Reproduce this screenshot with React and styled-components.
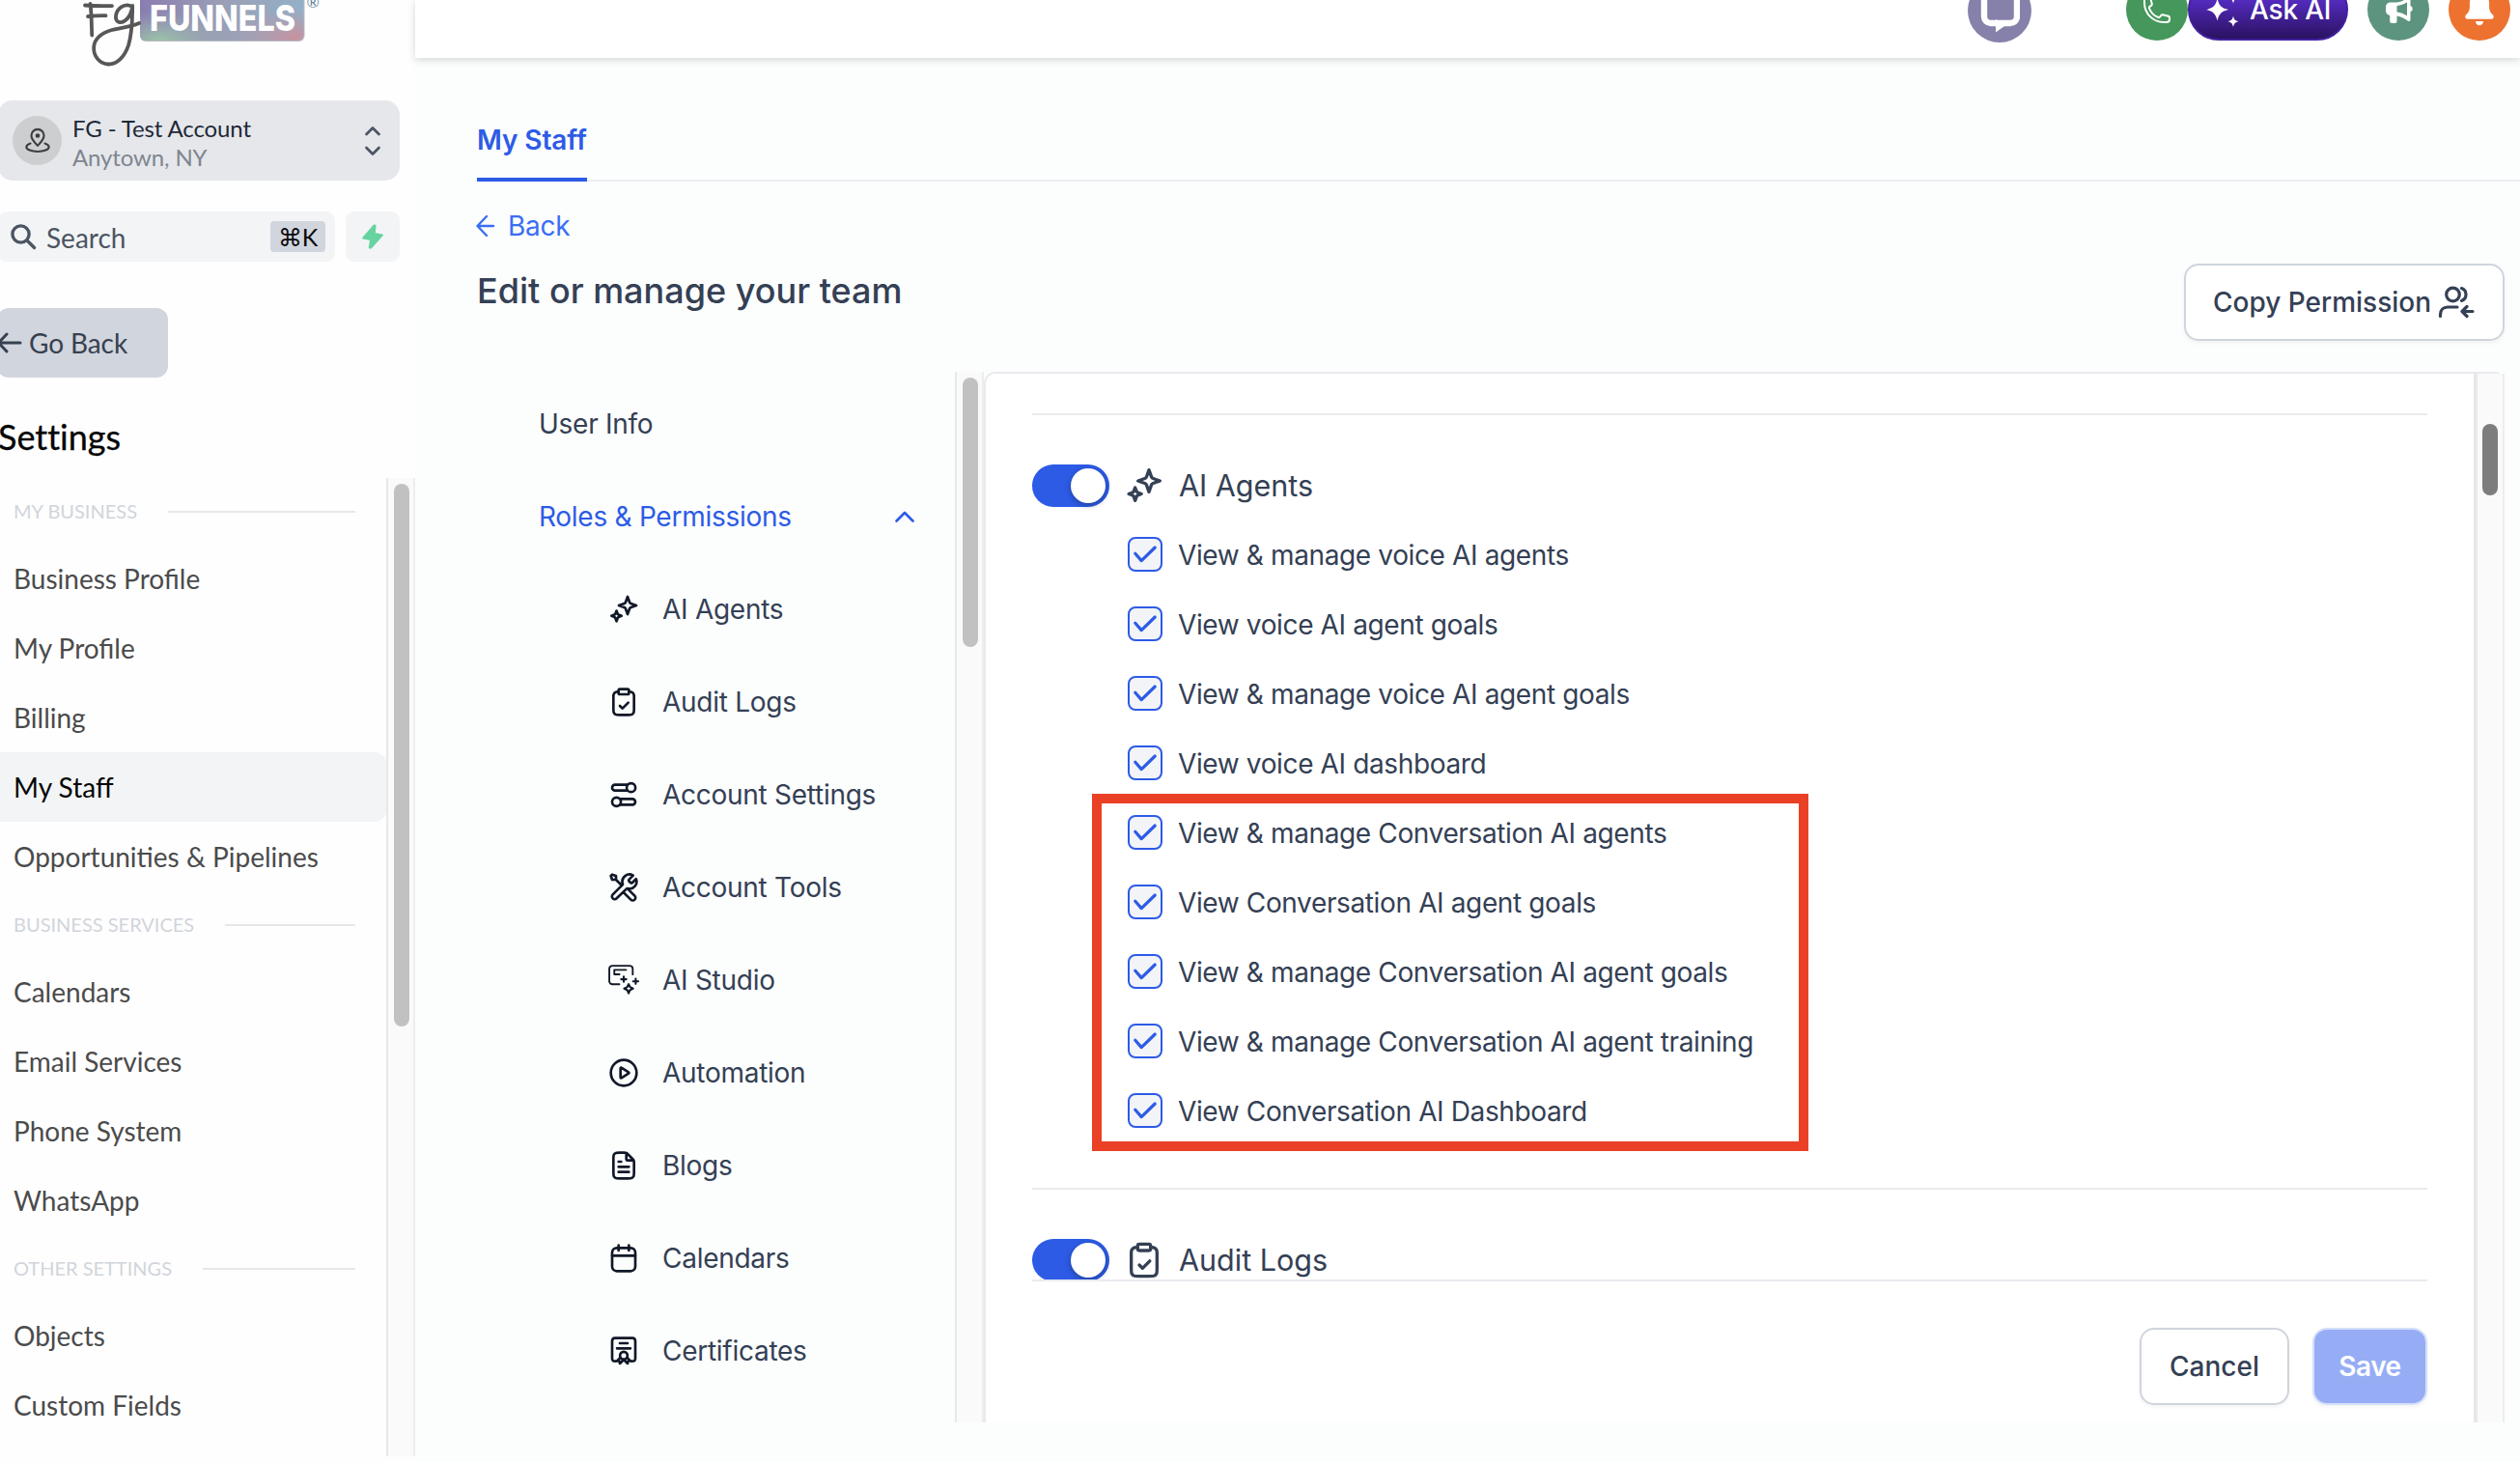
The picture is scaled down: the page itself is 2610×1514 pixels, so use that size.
import React from "react";
import styled, { createGlobalStyle, css } from "styled-components";

const GlobalStyle = createGlobalStyle`
  * { box-sizing: border-box; }
  html, body { margin: 0; padding: 0; background: #fcfdfd; overflow: hidden; }
  button { font: inherit; color: inherit; border: 0; margin: 0; padding: 0; cursor: pointer; }
  svg { display: block; flex: none; }
`;

const lato = `Lato, "Open Sans", sans-serif`;
const inter = `Inter, Roboto, sans-serif`;

/* ---------- shell ---------- */

const Page = styled.div`
  display: flex;
  width: 2610px;
  height: 1514px;
  overflow: hidden;
  background: #fcfdfd;
  font-family: ${inter};
  font-size: 28px;
  letter-spacing: -0.27px;
  color: #344054;
`;

const Sidebar = styled.aside`
  flex: none;
  width: 430px;
  height: 1514px;
  display: flex;
  flex-direction: column;
  background: #fefefe;
  font-family: ${lato};
  letter-spacing: 0;
  overflow: hidden;
`;

const Main = styled.main`
  flex: 1;
  min-width: 0;
  display: flex;
  flex-direction: column;
`;

/* ---------- sidebar ---------- */

const LogoBox = styled.div`
  height: 104px;
  padding-left: 80px;
`;

const AccountSwitcher = styled.button`
  display: flex;
  align-items: center;
  width: 416px;
  height: 83px;
  margin-left: -2px;
  padding: 0 19px 0 15px;
  border-radius: 15px;
  background: #e5e7eb;
  text-align: left;
`;

const Avatar = styled.span`
  display: grid;
  place-items: center;
  width: 51px;
  height: 51px;
  border-radius: 50%;
  background: #cdced0;
  color: #3d3d3f;
`;

const AccountText = styled.span`
  flex: 1;
  display: flex;
  flex-direction: column;
  padding: 5px 0 0 11px;
  font-size: 24px;
  line-height: 30px;
  letter-spacing: -0.12px;
  color: #1f2937;
  white-space: nowrap;
`;

const Muted = styled.span`
  color: #80858f;
`;

const SearchRow = styled.div`
  display: flex;
  gap: 11px;
  margin: 32px 0 0 -2px;
`;

const SearchBox = styled.div`
  display: flex;
  align-items: center;
  width: 349px;
  height: 52px;
  padding: 0 10px 0 12px;
  border-radius: 9px;
  background: #f3f4f6;
  color: #4b5563;
`;

const SearchLabel = styled.span`
  flex: 1;
  padding: 1px 0 0 10px;
  font-size: 28px;
  line-height: 34px;
`;

const Shortcut = styled.kbd`
  display: flex;
  align-items: center;
  justify-content: center;
  gap: 2px;
  width: 57px;
  height: 32px;
  border-radius: 4px;
  background: #d1d5de;
  color: #0b0b0c;
  font-family: ${lato};
  font-size: 25px;
`;

const QuickButton = styled.button`
  display: grid;
  place-items: center;
  width: 56px;
  height: 52px;
  border-radius: 9px;
  background: #f3f4f6;
`;

const GoBack = styled.button`
  display: flex;
  align-items: center;
  gap: 7px;
  width: 177px;
  height: 72px;
  margin: 48px 0 0 -3px;
  border-radius: 12px;
  background: #d1d5dd;
  color: #374151;
  font-size: 28px;
  letter-spacing: -0.1px;
  white-space: nowrap;
`;

const SettingsTitle = styled.h1`
  margin: 39px 0 21px -2px;
  height: 44px;
  font-size: 36px;
  line-height: 44px;
  font-weight: 400;
  font-variant-ligatures: none;
  color: #060606;
  -webkit-text-stroke: 0.3px #060606;
`;

const SettingsScroll = styled.div`
  display: flex;
  height: 1013px;
`;

const SettingsNav = styled.nav`
  width: 400px;
`;

const GroupTitle = styled.div`
  display: flex;
  align-items: center;
  gap: 32px;
  height: 68px;
  padding: 0 32px 0 14px;
  font-size: 20px;
  color: #d1d5db;
  white-space: nowrap;

  &::after {
    content: "";
    flex: 1;
    height: 2px;
    margin-top: 2px;
    background: #e5e7eb;
  }
`;

const SettingsItem = styled.a`
  display: flex;
  align-items: center;
  height: 72px;
  padding-left: 14px;
  border-radius: 0 12px 12px 0;
  font-size: 28px;
  white-space: nowrap;
  color: ${(p) => (p.$active ? "#050505" : "#4b4b4c")};
  background: ${(p) => (p.$active ? "#f3f4f6" : "transparent")};
`;

/* ---------- scroll tracks ---------- */

const Track = styled.div`
  flex: none;
  width: ${(p) => p.$width || 30}px;
  padding: ${(p) => p.$offset}px 0 0 ${(p) => p.$inset || 6}px;
  background: #fafafa;
  border-left: ${(p) => p.$edge || 2}px solid #e8e8e8;
  border-right: 2px solid #ededed;
`;

const Thumb = styled.div`
  width: 16px;
  height: ${(p) => p.$length}px;
  border-radius: 8px;
  background: ${(p) => p.$color || "#c1c1c1"};
`;

/* ---------- top bar ---------- */

const TopBar = styled.header`
  position: relative;
  flex: none;
  display: flex;
  align-items: flex-start;
  justify-content: flex-end;
  height: 60px;
  padding-right: 10px;
  background: #fff;
  box-shadow: 0 2px 8px rgba(0, 0, 0, 0.16);
`;

const RoundButton = styled.button`
  display: grid;
  place-items: center;
  flex: none;
  width: ${(p) => p.$size || 64}px;
  height: ${(p) => p.$size || 64}px;
  margin: -22px ${(p) => p.$after || 0}px 0 0;
  border-radius: 50%;
  background: ${(p) => p.$color};
  color: #fff;
`;

const AskButton = styled.button`
  display: flex;
  align-items: center;
  flex: none;
  gap: 10px;
  width: 166px;
  height: 64px;
  margin: -22px 20px 0 0;
  padding-left: 16px;
  border-radius: 32px;
  border: 2px solid #43209f;
  background: linear-gradient(#6a3be0 0%, #5129b8 38%, #2a1260 100%);
  color: #fff;
  font-size: 28px;
  font-weight: 500;
  letter-spacing: -0.2px;
  white-space: nowrap;
`;

/* ---------- page head ---------- */

const Tabs = styled.div`
  flex: none;
  display: flex;
  height: 128px;
  margin-left: 64px;
  border-bottom: 2px solid #eceef3;
`;

const Tab = styled.a`
  height: 128px;
  padding-top: 68px;
  border-bottom: 4px solid #2d5be6;
  color: #2d5be6;
  font-weight: 600;
  font-size: 28px;
  line-height: 34px;
  letter-spacing: -0.1px;
  white-space: nowrap;
`;

const PageHead = styled.div`
  flex: none;
  display: flex;
  justify-content: space-between;
  height: 197px;
  padding: 0 16px 0 64px;
`;

const HeadText = styled.div`
  padding-top: 28px;
`;

const BackLink = styled.a`
  display: flex;
  align-items: center;
  gap: 13px;
  height: 36px;
  margin-left: -1px;
  color: #3a6ef4;
  font-size: 28px;
`;

const Title = styled.h2`
  margin: 27px 0 0;
  height: 44px;
  font-size: 36px;
  line-height: 44px;
  font-weight: 500;
  letter-spacing: 0;
  color: #344054;
  white-space: nowrap;
`;

const Button = styled.button`
  display: flex;
  align-items: center;
  justify-content: center;
  gap: 6px;
  width: ${(p) => p.$width}px;
  height: 80px;
  border-radius: 15px;
  border: 2px solid #d0d5dd;
  background: #fff;
  box-shadow: 0 2px 4px rgba(16, 24, 40, 0.05);
  color: #344054;
  font-size: 28px;
  font-weight: 500;
  white-space: nowrap;

  ${(p) =>
    p.$primary &&
    css`
      border-color: #d5dffb;
      background: #96adf5;
      color: #fff;
      font-weight: 600;
      letter-spacing: -0.5px;
    `}
`;

const HeadButton = styled(Button)`
  margin-top: 85px;
`;

/* ---------- permission area ---------- */

const Body = styled.div`
  display: flex;
  height: 1088px;
  padding-right: 16px;
`;

const RoleNav = styled.nav`
  flex: none;
  width: 559px;
  padding-top: 6px;
`;

const RoleItem = styled.a`
  display: flex;
  align-items: center;
  justify-content: space-between;
  height: 96px;
  padding: 0 41px 0 128px;
  color: ${(p) => (p.$active ? "#2d5be6" : "#344054")};
  white-space: nowrap;
`;

const RoleChild = styled.a`
  display: flex;
  align-items: center;
  gap: 24px;
  height: 96px;
  padding-left: 200px;
  white-space: nowrap;

  svg { color: #101828; }
`;

const Panel = styled.section`
  flex: 1;
  display: flex;
  border-top: 2px solid #eaeaef;
  border-left: 2px solid #eaeaef;
  border-radius: 12px 10px 0 0;
  background: #fff;
`;

const PanelInner = styled.div`
  flex: 1;
  display: flex;
  flex-direction: column;
  padding: 0 48px;
`;

const PermissionList = styled.div`
  position: relative;
  height: 938px;
  padding-top: 41px;
  overflow: hidden;
`;

const PermissionGroup = styled.div`
  border-top: 2px solid #eaeaef;
  padding-top: 51px;
  height: 802px;
`;

const GroupHead = styled.div`
  display: flex;
  align-items: center;
  gap: 16px;
  height: 44px;
  font-size: 30.5px;
  line-height: 36px;
  letter-spacing: 0;
  white-space: nowrap;
`;

const Toggle = styled.span`
  display: flex;
  justify-content: flex-end;
  width: 80px;
  height: 44px;
  padding: 4px;
  border-radius: 22px;
  background: #2d5be6;

  &::after {
    content: "";
    width: 36px;
    height: 36px;
    border-radius: 50%;
    background: #fff;
    box-shadow: 0 2px 6px rgba(16, 24, 40, 0.4);
  }
`;

const Options = styled.div`
  padding: 13px 0 0 99px;
`;

const Option = styled.label`
  display: flex;
  align-items: center;
  gap: 16px;
  height: 72px;
  letter-spacing: -0.37px;
  white-space: nowrap;
`;

const OptionText = styled.span`
  padding-top: 2px;
`;

const Box = styled.span`
  display: grid;
  place-items: center;
  width: 36px;
  height: 36px;
  border: 2px solid #2d5be6;
  border-radius: 8px;
  background: #f2f4f7;
  color: #2d5be6;
`;

const Highlight = styled.div`
  position: absolute;
  left: 62px;
  top: 435px;
  width: 742px;
  height: 370px;
  border: 10px solid #ea4026;
  pointer-events: none;
`;

const PanelFooter = styled.footer`
  display: flex;
  justify-content: flex-end;
  gap: 24px;
  padding-top: 48px;
  border-top: 2px solid #eaeaef;
`;

/* ---------- icons ---------- */

const Icon = ({ size = 32, width = 2, children }) => (
  <svg
    width={size}
    height={size}
    viewBox="0 0 24 24"
    fill="none"
    stroke="currentColor"
    strokeWidth={width}
    strokeLinecap="round"
    strokeLinejoin="round"
  >
    {children}
  </svg>
);

const StarsIcon = (p) => (
  <Icon {...p}>
    <path d="M15 2.2l1.5 4.2c.2.6.5.9 1.1 1.1L21.8 9l-4.2 1.5c-.6.2-.9.5-1.1 1.1L15 15.8l-1.5-4.2c-.2-.6-.5-.9-1.1-1.1L8.2 9l4.2-1.5c.6-.2.9-.5 1.1-1.1z" />
    <path d="M6.4 13.2l.9 2.3c.15.4.3.55.7.7l2.3.9-2.3.9c-.4.15-.55.3-.7.7l-.9 2.5-.9-2.5c-.15-.4-.3-.55-.7-.7l-2.3-.9 2.3-.9c.4-.15.55-.3.7-.7z" />
  </Icon>
);

const ClipboardIcon = (p) => (
  <Icon {...p}>
    <path d="M16 4c.93 0 1.4 0 1.78.1a3 3 0 0 1 2.12 2.12C20 6.6 20 7.07 20 8v9.2c0 1.68 0 2.52-.33 3.16a3 3 0 0 1-1.31 1.31C17.72 22 16.88 22 15.2 22H8.8c-1.68 0-2.52 0-3.16-.33a3 3 0 0 1-1.31-1.31C4 19.72 4 18.88 4 17.2V8c0-.93 0-1.4.1-1.78A3 3 0 0 1 6.22 4.1C6.6 4 7.07 4 8 4" />
    <rect x="8" y="2" width="8" height="4" rx="1" />
    <path d="M9 15l2 2 4.5-4.5" />
  </Icon>
);

const TogglesIcon = (p) => (
  <Icon {...p}>
    <path d="M14.6 4.25H5.25a2.25 2.25 0 0 0 0 4.5h9.35M9.4 15.25h9.35a2.25 2.25 0 0 1 0 4.5H9.4" />
    <circle cx="17.7" cy="6.5" r="3.4" />
    <circle cx="6.4" cy="17.5" r="3.4" />
  </Icon>
);

const ToolsIcon = (p) => (
  <Icon {...p}>
    <path d="M6 6l4.5 4.5M6 6H3L2 3l1-1 3 1v3zm13.26-3.26l-2.63 2.63c-.4.4-.6.6-.67.82a1 1 0 0 0 0 .62c.07.23.27.43.67.82l.24.24c.4.4.6.6.82.67a1 1 0 0 0 .62 0c.23-.07.43-.27.82-.67l2.46-2.46a5.5 5.5 0 0 1-6.2 7.49c-.36-.07-.54-.11-.65-.1a.8.8 0 0 0-.28.09c-.1.05-.19.14-.38.33L6.5 20.5a2.12 2.12 0 0 1-3-3l7.28-7.28c.19-.19.28-.28.33-.38a.8.8 0 0 0 .09-.28c.01-.11-.03-.29-.1-.65a5.5 5.5 0 0 1 8.16-6.17zM12 16l5.5 5.5a2.12 2.12 0 0 0 3-3l-4.53-4.52" />
  </Icon>
);

const StudioIcon = () => (
  <Icon width={1.4}>
    <path d="M19 7.6V3.2A2.4 2.4 0 0 0 16.6.8H3.2A2.4 2.4 0 0 0 .8 3.2v9.6a2.4 2.4 0 0 0 2.4 2.4h5.4" />
    <path d="M13.8 4H4.7v3.5h4" />
    <path d="M12 9.3v4M10 11.3h4M21.3 10.9v4M19.3 12.9h4" strokeWidth="1.6" />
    <path d="M15.8 15.1l.9 1.9c.15.3.25.4.55.55l2 .95-2 .95c-.3.15-.4.25-.55.55l-.9 2.2-.9-2.2c-.15-.3-.25-.4-.55-.55l-2-.95 2-.95c.3-.15.4-.25.55-.55z" strokeWidth="1.6" />
  </Icon>
);

const PlayIcon = () => (
  <Icon>
    <circle cx="12" cy="12" r="10" />
    <path d="M9.5 8.97c0-.48 0-.72.1-.85a.5.5 0 0 1 .36-.2c.17-.01.37.12.77.38l4.72 3.03c.35.22.52.34.58.48a.5.5 0 0 1 0 .39c-.06.14-.23.25-.58.48l-4.72 3.03c-.4.26-.6.39-.77.38a.5.5 0 0 1-.36-.2c-.1-.13-.1-.37-.1-.85z" />
  </Icon>
);

const FileIcon = () => (
  <Icon>
    <path d="M14 2.3V6.4c0 .56 0 .84.11 1.05a1 1 0 0 0 .44.44C14.76 8 15.04 8 15.6 8h4.1M8 9h2M8 13h8M8 17h8M20 9.99v7.21c0 1.68 0 2.52-.33 3.16a3 3 0 0 1-1.31 1.31C17.72 22 16.88 22 15.2 22H8.8c-1.68 0-2.52 0-3.16-.33a3 3 0 0 1-1.31-1.31C4 19.72 4 18.88 4 17.2V6.8c0-1.68 0-2.52.33-3.16a3 3 0 0 1 1.31-1.31C6.28 2 7.12 2 8.8 2h3.21c.73 0 1.1 0 1.45.08a3 3 0 0 1 .87.36c.3.19.56.45 1.08.96l3.18 3.18c.52.52.78.78.96 1.08a3 3 0 0 1 .36.87c.08.35.08.71.08 1.45z" />
  </Icon>
);

const CalendarIcon = () => (
  <Icon>
    <rect x="3" y="4" width="18" height="18" rx="3.6" />
    <path d="M3 10h18M8 2v4M16 2v4" />
  </Icon>
);

const CertificateIcon = () => (
  <Icon>
    <path d="M6 20c-1 0-1.6 0-2-.2-.8-.3-1-.8-1-1.800V4.6C3 3 3.4 2 5.2 2h13.6C20.6 2 21 3 21 4.6V18c0 1-.2 1.5-1 1.8-.4.2-1 .2-2 .2M9 6h6M6.8 10h10.4" />
    <circle cx="12" cy="15.6" r="2.9" />
    <path d="M9.3 17.2L7 19.6l1.6.4.4 1.7 3-3 3 3 .4-1.7 1.6-.4-2.3-2.4" />
  </Icon>
);

const CheckIcon = () => (
  <svg width="26" height="24" viewBox="0 0 26 24" fill="none" stroke="currentColor" strokeWidth="3.2" strokeLinecap="round" strokeLinejoin="round">
    <path d="M2.8 11.2l6.4 7.4L23.2 5" />
  </svg>
);

const Logo = () => (
  <svg width="255" height="80" viewBox="80 0 255 80">
    <defs>
      <linearGradient id="badge" x1="0" y1="0" x2="1" y2="0">
        <stop offset="0" stopColor="#8a7db0" />
        <stop offset="0.5" stopColor="#9a9fb5" />
        <stop offset="1" stopColor="#93b0c8" />
      </linearGradient>
      <radialGradient id="green" cx="0.12" cy="1" r="0.42">
        <stop offset="0" stopColor="#9cc4a6" />
        <stop offset="1" stopColor="#9cb4b4" stopOpacity="0" />
      </radialGradient>
      <radialGradient id="rose" cx="0.95" cy="0.95" r="0.42">
        <stop offset="0" stopColor="#c9929f" />
        <stop offset="1" stopColor="#b39aab" stopOpacity="0" />
      </radialGradient>
    </defs>
    <rect x="145" y="-30" width="170.5" height="73" rx="6" fill="#b9bcc4" />
    <rect x="145" y="-30" width="169.5" height="72" rx="6" fill="url(#badge)" />
    <rect x="145" y="-30" width="169.5" height="72" rx="6" fill="url(#green)" />
    <rect x="145" y="-30" width="169.5" height="72" rx="6" fill="url(#rose)" />
    <g fill="none" stroke="#575757" strokeWidth="3.8" strokeLinecap="round" strokeLinejoin="round">
      <path d="M88 5.5c9 .8 19 .8 28 .6M93.5 4c1.5 11 1.3 22 1.7 32.500M91 17c6-.8 12-1 18.5-.9" />
      <path d="M137 7c-7-4.5-16 1-17 9.5-.8 6.5 5 8.5 10 4.5 4-3.2 6.500-9 7.2-15-.3 13 .3 26-4.2 41-4 12-12 20-21 19.500-9-.6-15.500-8.500-14.800-18 .8-9.500 8.800-14.500 18.800-17.500 8-2.400 20-3 28-7" />
    </g>
    <text x="155" y="32" fontFamily={inter} fontWeight="800" fontSize="37.5" fill="#fff" textLength="151" lengthAdjust="spacingAndGlyphs">
      FUNNELS
    </text>
    <text x="317.5" y="8" fontFamily={lato} fontSize="16" fill="#5f8499">®</text>
  </svg>
);

const PinIcon = () => (
  <Icon size={28} width={1.8}>
    <path d="M12 16.2c2.6-2.9 5.6-5.7 5.6-9a5.6 5.6 0 0 0-11.2 0c0 3.300 3 6.100 5.600 9z" />
    <circle cx="12" cy="7.3" r="1.1" fill="currentColor" />
    <path d="M5.6 14.2c-2.200.7-3.600 1.900-3.600 3.200 0 2.200 4.500 4 10 4s10-1.800 10-4c0-1.300-1.400-2.500-3.600-3.200" />
  </Icon>
);

const UpDownIcon = () => (
  <svg width="18" height="32" viewBox="0 0 18 32" fill="none" stroke="#4b5563" strokeWidth="2.7" strokeLinecap="round" strokeLinejoin="round">
    <path d="M2.5 9L9 2.5 15.5 9M2.5 23L9 29.5l6.5-6.5" />
  </svg>
);

const SearchIcon = () => (
  <svg width="28" height="28" viewBox="0 0 28 28" fill="none" stroke="currentColor" strokeWidth="3.4" strokeLinecap="round">
    <circle cx="11.5" cy="11.5" r="8.6" />
    <path d="M18 18l7.5 7.5" />
  </svg>
);

const BoltIcon = () => (
  <svg width="24" height="26" viewBox="0 0 24 26" fill="#67d3a0" stroke="#67d3a0" strokeWidth="1.8" strokeLinejoin="round">
    <path d="M13.200 1.500L2 14.600l8 1.400-1.400 8.500 1.600.1L22 11.400l-8.200-1.500.9-8.200z" />
  </svg>
);

const ArrowLeft = ({ w = 24, h = 24, stroke = 3 }) => (
  <svg width={w} height={h} viewBox={`0 0 ${w} ${h}`} fill="none" stroke="currentColor" strokeWidth={stroke} strokeLinecap="round" strokeLinejoin="round">
    <path d={`M${w - 2} ${h / 2}H2M${h / 2 - 1} 2L1.5 ${h / 2}l${h / 2 - 2.5} ${h / 2 - 2}`} />
  </svg>
);

const ChevronUp = () => (
  <svg width="22" height="14" viewBox="0 0 22 14" fill="none" stroke="currentColor" strokeWidth="2.7" strokeLinecap="round" strokeLinejoin="round">
    <path d="M2.5 11.5L11 3l8.500 8.500" />
  </svg>
);

const CopyUsersIcon = () => (
  <svg width="40" height="40" viewBox="0 0 40 40" fill="none" stroke="currentColor" strokeWidth="3.2" strokeLinecap="round" strokeLinejoin="round">
    <circle cx="16.5" cy="12" r="6.8" />
    <path d="M25.500 5.600a6.800 6.800 0 0 1 0 12.800M3.500 34.500v-1.500c0-5 3-8 7.500-8h10M37 29.500H27M31 24.500l-5 5 5 5" />
  </svg>
);

const ChatIcon = () => (
  <svg width="42" height="52" viewBox="0 0 42 52">
    <rect x="5" y="6" width="34" height="33" rx="7" fill="none" stroke="#fff" strokeWidth="6.4" />
    <path d="M17 35v13.500l10.500-7.500z" fill="#fff" />
  </svg>
);

const PhoneIcon = () => (
  <svg width="32" height="32" viewBox="0 0 24 24" fill="none" stroke="#fff" strokeWidth="1.5" strokeLinecap="round" strokeLinejoin="round">
    <path d="M2.250 6.750c0 8.284 6.716 15 15 15h2.250a2.250 2.250 0 0 0 2.250-2.250v-1.372c0-.516-.351-.966-.852-1.091l-4.423-1.106c-.44-.11-.902.055-1.173.417l-.97 1.293c-.282.376-.769.542-1.210.380a12.035 12.035 0 0 1-7.143-7.143c-.162-.441.004-.928.380-1.210l1.293-.97c.363-.271.527-.734.417-1.173L6.963 3.102a1.125 1.125 0 0 0-1.091-.852H4.500A2.250 2.250 0 0 0 2.250 4.500v2.250z" />
  </svg>
);

const SparkleIcon = () => (
  <svg width="36" height="42" viewBox="0 0 36 42" fill="#fff">
    <path d="M12.500 9.500c1.700 7.200 4.200 9.800 11.500 11.500-7.300 1.700-9.800 4.300-11.500 11.500C10.800 25.300 8.300 22.700 1 21c7.300-1.700 9.800-4.300 11.500-11.500z" />
    <path d="M29 3c.8 3.600 2 4.900 5.500 5.700-3.500.8-4.700 2.100-5.500 5.700-.8-3.600-2-4.900-5.500-5.700 3.500-.8 4.700-2.100 5.500-5.700zM29 27.500c.8 3.600 2 4.900 5.500 5.700-3.500.8-4.700 2.100-5.500 5.700-.8-3.600-2-4.900-5.500-5.700 3.500-.8 4.700-2.100 5.500-5.700z" />
  </svg>
);

const MegaphoneIcon = () => (
  <svg width="32" height="32" viewBox="0 0 32 32">
    <path fill="#fff" fillRule="evenodd" d="M26 3.500c1.200-.5 2.500.2 2.500 1.600v6.800c1.400.6 2.200 1.700 2.200 3.200s-.8 2.600-2.200 3.200v8c0 1.400-1.300 2.100-2.500 1.500-3.500-2.400-7-4.500-11.500-5.300V28c0 1.200-.8 2-2 2H9.200c-1.200 0-2-.8-2-2v-6C4.500 21.500 3 19.500 3 17v-3.500C3 10.500 5 8.500 8 8.500h5.500c5 0 8.500-2.300 12.500-5zM14.500 12v6.500c3.800.4 7.200 1.800 10.500 3.800V8.300C21.800 10.300 18.300 11.700 14.500 12z" />
  </svg>
);

const BellIcon = () => (
  <svg width="34" height="38" viewBox="0 0 34 38" fill="#fff">
    <path d="M17 0c1.400 0 2.500 1 2.500 2.500v.3c4.600 1 7.600 4.500 7.600 9.200v4c0 4 1.300 6 4 8.500 1.300 1.500.4 4.300-1.600 4.300h-25c-2 0-2.900-2.800-1.600-4.300 2.700-2.500 4-4.500 4-8.500v-4c0-4.700 3-8.200 7.600-9.200v-.3C14.500 1 15.600 0 17 0zM13 31h8c0 2.500-1.700 4.300-4 4.300s-4-1.800-4-4.300z" />
  </svg>
);

/* ---------- data ---------- */

const settingsGroups = [
  { title: "MY BUSINESS", items: ["Business Profile", "My Profile", "Billing", "My Staff", "Opportunities & Pipelines"] },
  { title: "BUSINESS SERVICES", items: ["Calendars", "Email Services", "Phone System", "WhatsApp"] },
  { title: "OTHER SETTINGS", items: ["Objects", "Custom Fields"] },
];

const roleItems = [
  ["AI Agents", StarsIcon],
  ["Audit Logs", ClipboardIcon],
  ["Account Settings", TogglesIcon],
  ["Account Tools", ToolsIcon],
  ["AI Studio", StudioIcon],
  ["Automation", PlayIcon],
  ["Blogs", FileIcon],
  ["Calendars", CalendarIcon],
  ["Certificates", CertificateIcon],
];

const agentOptions = [
  "View & manage voice AI agents",
  "View voice AI agent goals",
  "View & manage voice AI agent goals",
  "View voice AI dashboard",
  "View & manage Conversation AI agents",
  "View Conversation AI agent goals",
  "View & manage Conversation AI agent goals",
  "View & manage Conversation AI agent training",
  "View Conversation AI Dashboard",
];

export default function App() {
  return (
    <Page>
      <GlobalStyle />
      <Sidebar>
        <LogoBox>
          <Logo />
        </LogoBox>
        <AccountSwitcher>
          <Avatar>
            <PinIcon />
          </Avatar>
          <AccountText>
            <span>FG - Test Account</span>
            <Muted>Anytown, NY</Muted>
          </AccountText>
          <UpDownIcon />
        </AccountSwitcher>
        <SearchRow>
          <SearchBox>
            <SearchIcon />
            <SearchLabel>Search</SearchLabel>
            <Shortcut>⌘K</Shortcut>
          </SearchBox>
          <QuickButton>
            <BoltIcon />
          </QuickButton>
        </SearchRow>
        <GoBack>
          <ArrowLeft w={26} h={22} />
          Go Back
        </GoBack>
        <SettingsTitle>Settings</SettingsTitle>
        <SettingsScroll>
          <SettingsNav>
            {settingsGroups.map((group) => (
              <React.Fragment key={group.title}>
                <GroupTitle>{group.title}</GroupTitle>
                {group.items.map((item) => (
                  <SettingsItem key={item} $active={item === "My Staff"}>
                    {item}
                  </SettingsItem>
                ))}
              </React.Fragment>
            ))}
          </SettingsNav>
          <Track $offset={6}>
            <Thumb $length={562} />
          </Track>
        </SettingsScroll>
      </Sidebar>

      <Main>
        <TopBar>
          <RoundButton $size={66} $color="#8681aa" $after={98}>
            <ChatIcon />
          </RoundButton>
          <RoundButton $color="#45975b">
            <PhoneIcon />
          </RoundButton>
          <AskButton>
            <SparkleIcon />
            Ask AI
          </AskButton>
          <RoundButton $color="#5d947f" $after={20}>
            <MegaphoneIcon />
          </RoundButton>
          <RoundButton $color="#ed712f">
            <BellIcon />
          </RoundButton>
        </TopBar>

        <Tabs>
          <Tab>My Staff</Tab>
        </Tabs>
        <PageHead>
          <HeadText>
            <BackLink>
              <ArrowLeft w={20} h={24} stroke={2.4} />
              Back
            </BackLink>
            <Title>Edit or manage your team</Title>
          </HeadText>
          <HeadButton $width={332}>
            Copy Permission
            <CopyUsersIcon />
          </HeadButton>
        </PageHead>

        <Body>
          <RoleNav>
            <RoleItem>User Info</RoleItem>
            <RoleItem $active>
              Roles &amp; Permissions
              <ChevronUp />
            </RoleItem>
            {roleItems.map(([label, ItemIcon]) => (
              <RoleChild key={label}>
                <ItemIcon />
                {label}
              </RoleChild>
            ))}
          </RoleNav>
          <Track $offset={6}>
            <Thumb $length={279} />
          </Track>
          <Panel>
            <PanelInner>
              <PermissionList>
                <PermissionGroup>
                  <GroupHead>
                    <Toggle />
                    <StarsIcon size={40} />
                    AI Agents
                  </GroupHead>
                  <Options>
                    {agentOptions.map((label) => (
                      <Option key={label}>
                        <Box>
                          <CheckIcon />
                        </Box>
                        <OptionText>{label}</OptionText>
                      </Option>
                    ))}
                  </Options>
                </PermissionGroup>
                <PermissionGroup>
                  <GroupHead>
                    <Toggle />
                    <ClipboardIcon size={40} />
                    Audit Logs
                  </GroupHead>
                </PermissionGroup>
                <Highlight />
              </PermissionList>
              <PanelFooter>
                <Button $width={155}>Cancel</Button>
                <Button $width={119} $primary>
                  Save
                </Button>
              </PanelFooter>
            </PanelInner>
            <Track $width={32} $edge={4} $inset={5} $offset={52}>
              <Thumb $length={74} $color="#7d7d7d" />
            </Track>
          </Panel>
        </Body>
      </Main>
    </Page>
  );
}
